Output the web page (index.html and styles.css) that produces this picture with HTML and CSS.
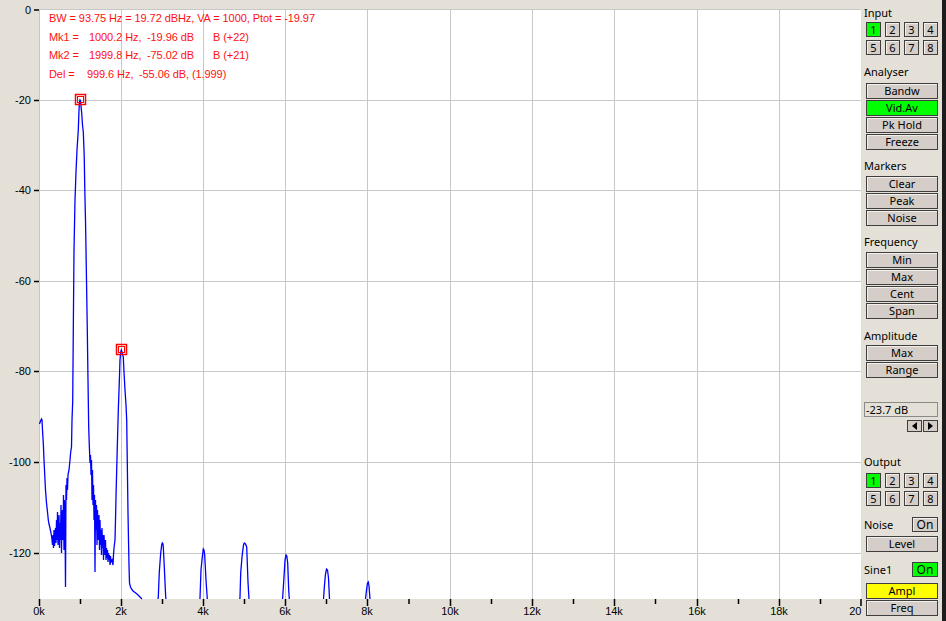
FILE: index.html
```html
<!DOCTYPE html>
<html>
<head>
<meta charset="utf-8">
<link rel="stylesheet" href="styles.css">
</head>
<body>
<div class="main">
  <svg class="chart" width="862" height="621" viewBox="0 0 862 621" xmlns="http://www.w3.org/2000/svg">
    <rect x="39" y="9" width="822" height="590" fill="#ffffff"/>
    <g stroke="#c8c8c8" stroke-width="1">
      <line x1="39" y1="9.5" x2="861" y2="9.5"/>
      <line x1="39" y1="100.5" x2="861" y2="100.5"/>
      <line x1="39" y1="190.5" x2="861" y2="190.5"/>
      <line x1="39" y1="281.5" x2="861" y2="281.5"/>
      <line x1="39" y1="371.5" x2="861" y2="371.5"/>
      <line x1="39" y1="462.5" x2="861" y2="462.5"/>
      <line x1="39" y1="553.5" x2="861" y2="553.5"/>
      <line x1="39.5" y1="9" x2="39.5" y2="599"/>
      <line x1="121.5" y1="9" x2="121.5" y2="599"/>
      <line x1="203.5" y1="9" x2="203.5" y2="599"/>
      <line x1="285.5" y1="9" x2="285.5" y2="599"/>
      <line x1="367.5" y1="9" x2="367.5" y2="599"/>
      <line x1="450.5" y1="9" x2="450.5" y2="599"/>
      <line x1="532.5" y1="9" x2="532.5" y2="599"/>
      <line x1="614.5" y1="9" x2="614.5" y2="599"/>
      <line x1="697.5" y1="9" x2="697.5" y2="599"/>
      <line x1="779.5" y1="9" x2="779.5" y2="599"/>
    </g>
    <g stroke="#000" stroke-width="1.5">
      <line x1="34" y1="10" x2="39" y2="10"/>
      <line x1="34" y1="100.5" x2="39" y2="100.5"/>
      <line x1="34" y1="190.5" x2="39" y2="190.5"/>
      <line x1="34" y1="281.5" x2="39" y2="281.5"/>
      <line x1="34" y1="371.5" x2="39" y2="371.5"/>
      <line x1="34" y1="462.5" x2="39" y2="462.5"/>
      <line x1="34" y1="553.5" x2="39" y2="553.5"/>
      <line x1="39.5" y1="599" x2="39.5" y2="606"/>
      <line x1="80.5" y1="599" x2="80.5" y2="604"/>
      <line x1="121.5" y1="599" x2="121.5" y2="606"/>
      <line x1="162.5" y1="599" x2="162.5" y2="604"/>
      <line x1="203.5" y1="599" x2="203.5" y2="606"/>
      <line x1="244.5" y1="599" x2="244.5" y2="604"/>
      <line x1="285.5" y1="599" x2="285.5" y2="606"/>
      <line x1="326.5" y1="599" x2="326.5" y2="604"/>
      <line x1="367.5" y1="599" x2="367.5" y2="606"/>
      <line x1="409" y1="599" x2="409" y2="604"/>
      <line x1="450.5" y1="599" x2="450.5" y2="606"/>
      <line x1="491.5" y1="599" x2="491.5" y2="604"/>
      <line x1="532.5" y1="599" x2="532.5" y2="606"/>
      <line x1="573.5" y1="599" x2="573.5" y2="604"/>
      <line x1="614.5" y1="599" x2="614.5" y2="606"/>
      <line x1="655.5" y1="599" x2="655.5" y2="604"/>
      <line x1="697.5" y1="599" x2="697.5" y2="606"/>
      <line x1="738.5" y1="599" x2="738.5" y2="604"/>
      <line x1="779.5" y1="599" x2="779.5" y2="606"/>
      <line x1="820.5" y1="599" x2="820.5" y2="604"/>
      <line x1="861" y1="599" x2="861" y2="606"/>
    </g>
    <g class="ylab" text-anchor="end">
      <text x="31" y="14">0</text>
      <text x="31" y="104">-20</text>
      <text x="31" y="194">-40</text>
      <text x="31" y="285">-60</text>
      <text x="31" y="375">-80</text>
      <text x="31" y="466">-100</text>
      <text x="31" y="557">-120</text>
    </g>
    <g class="xlab" text-anchor="middle">
      <text x="39" y="615">0k</text>
      <text x="121" y="615">2k</text>
      <text x="203" y="615">4k</text>
      <text x="285" y="615">6k</text>
      <text x="367" y="615">8k</text>
      <text x="450" y="615">10k</text>
      <text x="532" y="615">12k</text>
      <text x="614" y="615">14k</text>
      <text x="697" y="615">16k</text>
      <text x="779" y="615">18k</text>
      <text x="861.5" y="615" text-anchor="end">20</text>
    </g>
    <g fill="none" stroke="#0000ff" stroke-width="1.3" stroke-linejoin="miter">
      <polyline points="39.5,424 40.5,421 41.5,419 42,420 42.5,430 43.3,443 44,460 45,480 45.5,490 46.5,503 47.5,512 48.3,520 49,524 50,528 51,533 51.7,537 52,540 52.5,545 53,535 53.5,548 54,530 54.5,546 55,538 55.5,528 56,543 56.5,520 57,540 57.5,512 58,545 58.5,530 59,515 59.5,548 60,523 60.5,540 61,505 61.5,553 62,520 62.5,510 63,540 63.5,495 64,550 64.5,500 65,520 65.5,587 66,485 66.5,500 67,478 67.5,490 68,475 69,470 70,460 70.7,452 71.5,447 72,420 72.7,402 73.3,330 74,250 75,200 76,172 77,150 78.3,130 79,110 79.5,102 80,100 80.5,101 81.7,113 82.5,125 83.3,132 84,150 84.3,160 84.8,190 85.5,220 86.5,280 87.3,330 88,380 88.7,427 89.3,445 90,463 90.5,455 91,475 91.5,460 92,500 92.5,470 93,505 93.5,485 94,520 94.5,495 95,572 95.5,500 96,530 96.5,505 97,545 97.5,510 98,530 98.5,540 99,515 99.5,550 100,520 100.5,545 101,530 101.5,555 102,528 102.5,548 103,535 103.5,560 104,535 104.5,545 105,555 105.5,540 106,560 106.5,548 107,558 107.5,550 108,562 108.5,553 109,560 109.5,555 110,565 110.5,556 111,562 112,560 113,565 113.5,555 114,548 115,540 115.5,520 116,497 117.3,447 118.3,410 119.3,382 120,360 120.7,352 121.3,350 122,352 123.3,357 124,372 125,390 126,405 126.7,420 127.3,463 128,513 128.5,540 129,565 129.5,583 130.5,587 131.5,589 133,591 135,592.5 137,594 139,596 141,598 142,599"/>
      <polyline points="158,599 158.3,597 159.3,572 160.7,553 161.7,545 162.3,543 163,544 163.3,547 164.3,567 165.7,597 166,599"/>
      <polyline points="199.8,599 200,598 201,570 202.3,557 203.3,549 204,550 204.7,555 206,580 207.3,599"/>
      <polyline points="239.8,599 240,597 240.7,573 242,557 243.5,545 244.3,543 245.5,544 246.7,547 248,582 249,599"/>
      <polyline points="282.5,599 282.7,597 284,577 285,560 286,555 286.8,556 287.7,563 288.7,590 289.3,599"/>
      <polyline points="323.5,599 324.5,585 325.5,574 326.5,569 327.5,570 328.5,578 329.5,599"/>
      <polyline points="365.5,599 366.5,590 367.5,583 368.3,582 369,586 370,599"/>
    </g>
    <g fill="none" stroke="#ff0000">
      <rect x="75.5" y="94.5" width="10" height="10" stroke-width="1.5"/>
      <rect x="77.5" y="96.5" width="6" height="6" stroke-width="1"/>
      <rect x="116.5" y="344.5" width="10" height="10" stroke-width="1.5"/>
      <rect x="118.5" y="346.5" width="6" height="6" stroke-width="1"/>
    </g>
  </svg>
  <div class="readout">
    <div class="row">BW = 93.75 Hz = 19.72 dBHz, VA = 1000, Ptot = -19.97</div>
    <div class="row"><span class="c1">Mk1 =</span><span class="c2">1000.2 Hz,</span><span class="c3">-19.96 dB</span><span>B (+22)</span></div>
    <div class="row"><span class="c1">Mk2 =</span><span class="c2">1999.8 Hz,</span><span class="c3">-75.02 dB</span><span>B (+21)</span></div>
    <div class="row"><span class="d1">Del =</span><span class="d2">999.6 Hz,</span><span>-55.06 dB, (1.999)</span></div>
  </div>
</div>
<div class="panel">
  <div class="lbl">Input</div>
  <div class="nums">
    <div class="btn on">1</div><div class="btn">2</div><div class="btn">3</div><div class="btn">4</div>
    <div class="btn">5</div><div class="btn">6</div><div class="btn">7</div><div class="btn">8</div>
  </div>
  <div class="lbl sec">Analyser</div>
  <div class="stack">
    <div class="btn wide">Bandw</div>
    <div class="btn wide on">Vid.Av</div>
    <div class="btn wide">Pk Hold</div>
    <div class="btn wide">Freeze</div>
  </div>
  <div class="lbl sec2">Markers</div>
  <div class="stack">
    <div class="btn wide">Clear</div>
    <div class="btn wide">Peak</div>
    <div class="btn wide">Noise</div>
  </div>
  <div class="lbl sec2">Frequency</div>
  <div class="stack">
    <div class="btn wide">Min</div>
    <div class="btn wide">Max</div>
    <div class="btn wide">Cent</div>
    <div class="btn wide">Span</div>
  </div>
  <div class="lbl sec">Amplitude</div>
  <div class="stack amp">
    <div class="btn wide">Max</div>
    <div class="btn wide">Range</div>
  </div>
  <div class="field">-23.7 dB</div>
  <div class="arrows">
    <div class="arr"><svg width="7" height="8" viewBox="0 0 7 8"><polygon points="6,0 6,8 1,4" fill="#000"/></svg></div>
    <div class="arr"><svg width="7" height="8" viewBox="0 0 7 8"><polygon points="1,0 1,8 6,4" fill="#000"/></svg></div>
  </div>
  <div class="lbl out">Output</div>
  <div class="nums">
    <div class="btn on">1</div><div class="btn">2</div><div class="btn">3</div><div class="btn">4</div>
    <div class="btn">5</div><div class="btn">6</div><div class="btn">7</div><div class="btn">8</div>
  </div>
  <div class="toggle noise"><span>Noise</span><div class="btn sw">On</div></div>
  <div class="btn wide lvl">Level</div>
  <div class="toggle sine"><span>Sine1</span><div class="btn sw on">On</div></div>
  <div class="stack ampl">
    <div class="btn wide yel">Ampl</div>
    <div class="btn wide">Freq</div>
  </div>
</div>
<div class="edge"></div>
</body>
</html>
```
FILE: styles.css
```css
html, body {
  margin: 0;
  padding: 0;
}
body {
  width: 946px;
  height: 621px;
  overflow: hidden;
  background: #e4e0d7;
  display: flex;
  font-family: "Noto Sans", "DejaVu Sans", sans-serif;
  font-size: 11px;
  color: #000;
}
.main {
  position: relative;
  width: 862px;
  height: 621px;
  flex: none;
  overflow: hidden;
}
.chart {
  display: block;
}
.ylab text, .xlab text {
  font-family: "Liberation Sans", Arial, sans-serif;
  font-size: 11px;
  fill: #000;
}
.readout {
  position: absolute;
  left: 49px;
  top: 9px;
  color: #ff1010;
  font-family: "Liberation Sans", Arial, sans-serif;
  font-size: 11px;
  line-height: 18.5px;
  letter-spacing: -0.08px;
  white-space: nowrap;
}
.row {
  height: 18.5px;
}
.readout span {
  display: inline-block;
}
.c1 { width: 40px; }
.c2 { width: 58px; }
.c3 { width: 66px; }
.d1 { width: 38px; }
.d2 { width: 52px; }

.panel {
  width: 80px;
  flex: none;
  box-sizing: border-box;
  padding: 6px 4px 0 2px;
  display: flex;
  flex-direction: column;
}
.edge {
  width: 4px;
  flex: none;
  background: #1c1c1c;
}
.lbl {
  height: 13px;
  line-height: 13px;
  white-space: nowrap;
}
.sec { margin-top: 10px; }
.sec2 { margin-top: 9px; }
.out { margin-top: 23px; }

.btn {
  box-sizing: border-box;
  background: #d5cdc8;
  border: 1px solid #3e3e3e;
  box-shadow: inset 1px 1px 0 #f3efea;
  text-align: center;
  white-space: nowrap;
}
.btn.on {
  background: #00ff00;
  box-shadow: none;
}
.btn.yel {
  background: #ffff00;
  box-shadow: none;
}
.nums {
  margin: 3px 0 0 2px;
  display: grid;
  grid-template-columns: repeat(4, 15px);
  grid-auto-rows: 15px;
  column-gap: 4px;
  row-gap: 3px;
}
.nums .btn {
  line-height: 13px;
}
.sec + .stack { margin-top: 5px; }
.sec2 + .stack { margin-top: 4px; }
.stack.amp { margin-top: 3px; }
.stack {
  margin-left: 2px;
  display: flex;
  flex-direction: column;
  gap: 1px;
}
.wide {
  width: 72px;
  height: 16px;
  line-height: 14px;
}
.field {
  margin-top: 24px;
  width: 74px;
  height: 15px;
  box-sizing: border-box;
  border: 1px solid #8a8a8a;
  line-height: 13px;
  padding-left: 1px;
}
.arrows {
  margin-top: 3px;
  display: flex;
  justify-content: flex-end;
  padding-right: 0;
  gap: 1px;
}
.arr {
  width: 15px;
  height: 12px;
  box-sizing: border-box;
  background: #d5cdc8;
  border: 1px solid #3e3e3e;
  display: flex;
  align-items: center;
  justify-content: center;
}
.arr svg { display: block; }
.out + .nums { margin-top: 5px; }
.toggle {
  display: flex;
  justify-content: space-between;
  align-items: center;
  height: 15px;
}
.toggle.noise { margin-top: 11px; }
.toggle.sine { margin-top: 10px; }
.sw {
  width: 26px;
  height: 15px;
  line-height: 13px;
  font-size: 12px;
}
.lvl {
  margin: 4px 0 0 2px;
}
.stack.ampl { margin-top: 6px; }
```
